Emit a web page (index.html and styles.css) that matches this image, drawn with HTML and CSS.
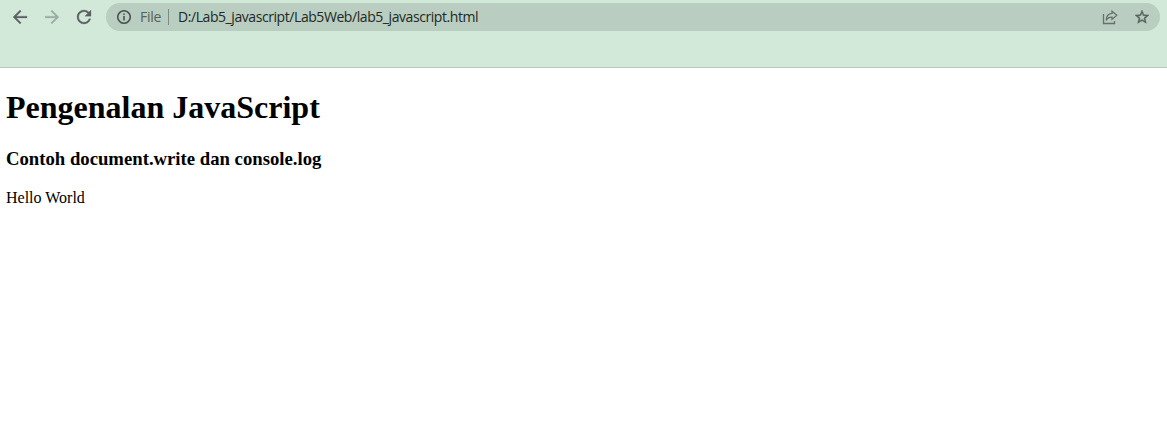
FILE: index.html
```html
<!DOCTYPE html>
<html lang="id">
<head>
<meta charset="utf-8">
<title>lab5_javascript.html</title>
<link rel="stylesheet" href="styles.css">
</head>
<body>
<header class="browser">
  <nav class="toolbar">
    <svg class="nav-icon" viewBox="4 4 16 16"><path d="M20 11H7.830l5.590-5.590L12 4l-8 8 8 8 1.410-1.410L7.830 13H20z"/></svg>
    <svg class="nav-icon disabled" viewBox="4 4 16 16"><path d="m12 4-1.410 1.410L16.170 11H4v2h12.170l-5.580 5.590L12 20l8-8z"/></svg>
    <svg class="nav-icon" viewBox="4 4 16 16"><path d="M17.650 6.350C16.200 4.900 14.210 4 12 4c-4.420 0-7.990 3.580-7.990 8s3.570 8 7.990 8c3.730 0 6.840-2.550 7.730-6h-2.080c-.820 2.330-3.040 4-5.650 4-3.310 0-6-2.690-6-6s2.690-6 6-6c1.660 0 3.140.690 4.220 1.780L13 11h7V4z"/></svg>
    <div class="address">
      <svg class="info" viewBox="0 0 14 14"><circle cx="7" cy="7" r="6.250"/><path d="M7 6v4.500M7 3.500V5"/></svg>
      <span class="scheme">File</span>
      <span class="divider"></span>
      <span class="url">D:/Lab5_javascript/Lab5Web/lab5_javascript.html</span>
      <svg class="share" viewBox="0 0 16 16"><path d="M1.500 5v9.500h11V12M10 2.200 14.800 6.300 10 10.400V8.200Q6 8.200 4.200 11.300q.3-6.500 5.800-6.900z"/></svg>
      <svg class="star" viewBox="2 2 20 20"><path d="m22 9.240-7.190-.620L12 2 9.190 8.630 2 9.240l5.460 4.730L5.820 21 12 17.270 18.180 21l-1.630-7.030zM12 15.400l-3.760 2.270 1-4.280-3.320-2.880 4.380-.380L12 6.100l1.710 4.040 4.380.380-3.320 2.880 1 4.280z"/></svg>
    </div>
  </nav>
</header>
<main class="page">
  <h1 class="title">Pengenalan JavaScript</h1>
  <h3 class="subtitle">Contoh document.write dan console.log</h3>
  <p class="output">Hello World</p>
</main>
</body>
</html>
```

FILE: styles.css
```css
body { margin: 0; background: #fff; color: #000; font-family: "Liberation Serif", serif; }
.browser { box-sizing: border-box; height: 68px; background: #d2e9d9; border-bottom: 1px solid #b7cabd; padding-top: 3px; }
.toolbar { display: flex; align-items: center; height: 28px; padding: 0 7px 0 13px; gap: 18px; }
.toolbar svg { flex: none; }
.nav-icon { width: 14px; height: 14px; fill: #5b6163; stroke: #5b6163; stroke-width: .3; overflow: visible; }
.disabled { fill: #9dada4; stroke: #9dada4; }
.address { flex: 1; display: flex; align-items: center; box-sizing: border-box; height: 28px; margin-left: -3px; padding: 0 11px; border-radius: 14px; background: #b9cdc0; font: 14px "Open Sans", sans-serif; }
.info { width: 14px; height: 14px; fill: none; stroke: #4c5553; stroke-width: 1.6; }
.scheme { width: 21px; margin-left: 9px; color: #56625c; letter-spacing: -.3px; line-height: 26px; }
.divider { width: 1px; height: 16px; margin: 0 9px 0 7px; background: #7d8c83; }
.url { flex: 1; color: #202924; letter-spacing: -.43px; line-height: 26px; }
.scheme, .url { padding-bottom: 1px; }
.share { width: 16px; height: 16px; fill: none; stroke: #65726b; stroke-width: 1.3; }
.star { width: 14px; height: 14px; margin-left: 17px; fill: #56615c; stroke: #56615c; stroke-width: .6; overflow: visible; }
.page { padding: 0 6px; }
.title { margin: 21px 0 0; font-size: 32px; line-height: 37px; }
.subtitle { margin: 22px 0 0; font-size: 18.72px; line-height: 21px; }
.output { margin: 20px 0 0; font-size: 16px; line-height: 18px; }
```
